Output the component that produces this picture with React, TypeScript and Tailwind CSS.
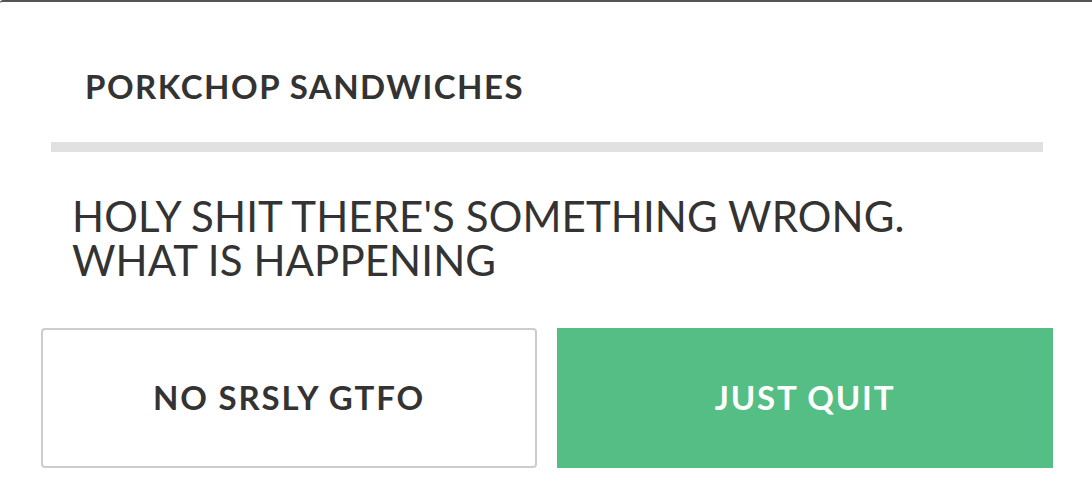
import React from "react";

export default function App() {
  return (
    <div className="w-[1092px] h-[503px] bg-white border-t-2 border-[#555] rounded-tl-[3px] text-[#333] font-['Lato',sans-serif] overflow-hidden">
      <div className="pt-[64px] pl-[85px] mb-[36px]">
        <h1 className="text-[33px] leading-[40px] font-bold tracking-[1.5px]">PORKCHOP SANDWICHES</h1>
      </div>
      <div className="ml-[51px] w-[992px] h-[10px] bg-[#e1e1e1]" />
      <p className="mt-[42px] pl-[72px] text-[42px] leading-[44px] font-normal tracking-[0.1px]">
        HOLY SHIT THERE'S SOMETHING WRONG.
        <br />
        WHAT IS HAPPENING
      </p>
      <div className="mt-[46px] ml-[41px] flex gap-[20px]">
        <button className="w-[496px] h-[140px] border-2 border-[#cccccc] rounded-[4px] bg-white text-[33px] font-bold text-[#333] tracking-[1.8px] flex items-center justify-center">
          NO SRSLY GTFO
        </button>
        <button className="w-[496px] h-[140px] bg-[#55be85] text-[33px] font-bold text-white tracking-[1.8px] flex items-center justify-center">
          JUST QUIT
        </button>
      </div>
    </div>
  );
}
